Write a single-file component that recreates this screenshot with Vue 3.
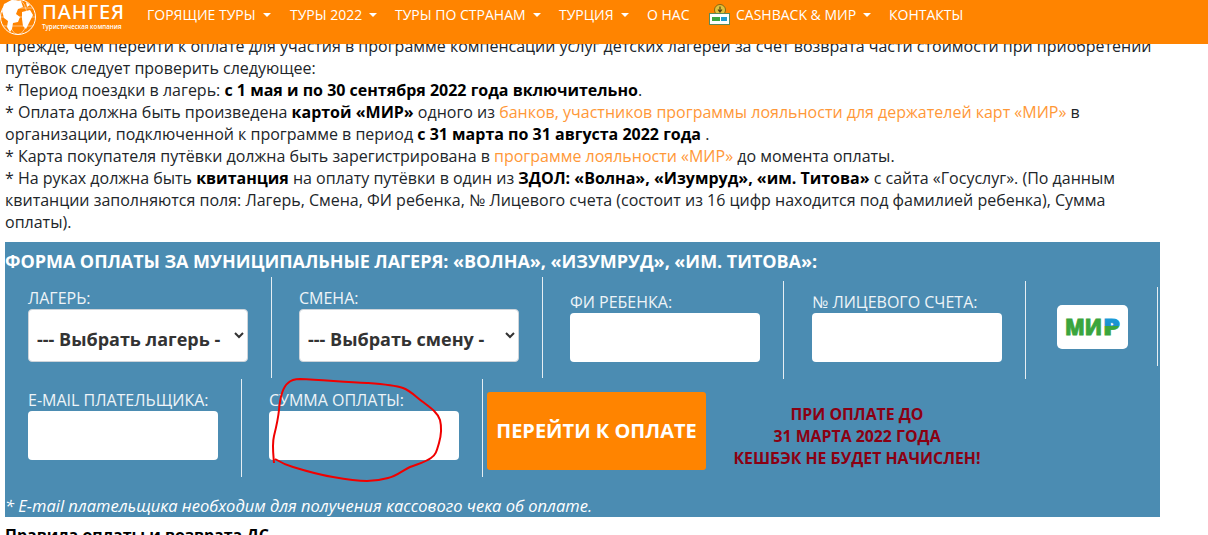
<template>
  <div class="page">
    <!-- шапка лежит поверх текста -->
    <header class="topbar">
      <div class="logo">
        <svg class="globe" width="38" height="38" viewBox="0 0 38 38">
          <circle cx="18" cy="17" r="17.5" fill="none" stroke="#fff" stroke-width="1" />
          <ellipse cx="18" cy="17" rx="9" ry="17.5" fill="none" stroke="#fff" stroke-width=".5" />
          <path d="M1 17h34M3 8h30M3 26h30" stroke="#fff" stroke-width=".5" />
          <path d="M4 4l8-4 9 1 2 6-5 2-2 5 4 3-2 5-5 1-1 6-2 3-3-5 1-6-4-3-2-7z" fill="#fff" />
          <path d="M22 12l8-2 3 5-3 6-4 8-3-3-1-7z" fill="#fff" />
          <path d="M26 2l4 3-3 2z" fill="#fff" />
        </svg>
        <div class="brand">
          <div class="brand-name">ПАНГЕЯ</div>
          <div class="brand-sub">Туристическая компания</div>
        </div>
      </div>
      <nav class="nav">
        <a v-for="item in navItems" :key="item.title" class="nav-item" :style="{ width: item.width + 'px' }">
          <svg v-if="item.icon" class="nav-icon" width="21" height="21" viewBox="0 0 21 21">
            <circle cx="11" cy="6" r="5.5" fill="#e2c13c" stroke="#6b5a12" stroke-width=".8" />
            <path d="M11 2.5v5M9 5.5l2 2.5 2-2.5" fill="none" stroke="#4d4010" stroke-width="1.2" />
            <rect x=".5" y="9.5" width="20" height="11" fill="#fff" stroke="#5d8a5a" />
            <rect x="3" y="13" width="8" height="4" fill="#3ba642" />
            <rect x="12" y="13" width="6" height="4" fill="#1f9ccf" />
          </svg>
          {{ item.title }}<span v-if="item.caret" class="caret"></span>
        </a>
      </nav>
    </header>

    <main class="content">
      <p class="intro">
        Прежде, чем перейти к оплате для участия в программе компенсации услуг детских лагерей за счет возврата части стоимости при приобретении путёвок следует проверить следующее:<br />
        * Период поездки в лагерь: <b>с 1 мая и по 30 сентября 2022 года включительно</b>.<br />
        * Оплата должна быть произведена <b>картой «МИР»</b> одного из <a class="link">банков, участников программы лояльности для держателей карт «МИР»</a> в организации, подключенной к программе в период <b>с 31 марта по 31 августа 2022 года</b> .<br />
        * Карта покупателя путёвки должна быть зарегистрирована в <a class="link">программе лояльности «МИР»</a> до момента оплаты.<br />
        * На руках должна быть <b>квитанция</b> на оплату путёвки в один из <b>ЗДОЛ: «Волна», «Изумруд», «им. Титова»</b> с сайта «Госуслуг». (По данным квитанции заполняются поля: Лагерь, Смена, ФИ ребенка, № Лицевого счета (состоит из 16 цифр находится под фамилией ребенка), Сумма оплаты).
      </p>

      <form class="pay-form" @submit.prevent>
        <h2 class="form-title">ФОРМА ОПЛАТЫ ЗА МУНИЦИПАЛЬНЫЕ ЛАГЕРЯ: «ВОЛНА», «ИЗУМРУД», «ИМ. ТИТОВА»:</h2>

        <div class="row row-top">
          <div class="col col-camp">
            <label>ЛАГЕРЬ:</label>
            <select><option>--- Выбрать лагерь -</option></select>
          </div>
          <div class="col col-shift">
            <label>СМЕНА:</label>
            <select><option>--- Выбрать смену -</option></select>
          </div>
          <div class="col col-child">
            <label>ФИ РЕБЕНКА:</label>
            <input type="text" />
          </div>
          <div class="col col-account">
            <label>№ ЛИЦЕВОГО СЧЕТА:</label>
            <input type="text" />
          </div>
          <div class="col col-mir">
            <div class="mir-card">
              <svg width="56" height="24" viewBox="0 0 56 24">
                <defs>
                  <linearGradient id="mirGrad" gradientUnits="userSpaceOnUse" x1="0" y1="3" x2="0" y2="20">
                    <stop offset="0" stop-color="#1a9bd7" />
                    <stop offset=".46" stop-color="#1a8fd0" />
                    <stop offset=".5" stop-color="#3ba53c" />
                    <stop offset="1" stop-color="#3ba53c" />
                  </linearGradient>
                </defs>
                <text x="0" y="20" class="mir-text" textLength="37" lengthAdjust="spacingAndGlyphs" fill="#3ba53c" stroke="#3ba53c" stroke-width=".9">МИ</text>
                <text x="38" y="20" class="mir-text" textLength="17" lengthAdjust="spacingAndGlyphs" fill="url(#mirGrad)" stroke="url(#mirGrad)" stroke-width=".9">Р</text>
              </svg>
            </div>
          </div>
        </div>

        <div class="row row-bottom">
          <div class="col col-email">
            <label>E-MAIL ПЛАТЕЛЬЩИКА:</label>
            <input type="text" />
          </div>
          <div class="col col-sum">
            <label>СУММА ОПЛАТЫ:</label>
            <input type="text" />
          </div>
          <button class="pay-btn" type="submit">ПЕРЕЙТИ К ОПЛАТЕ</button>
          <div class="notice">ПРИ ОПЛАТЕ ДО<br />31 МАРТА 2022 ГОДА<br />КЕШБЭК НЕ БУДЕТ НАЧИСЛЕН!</div>
        </div>

        <p class="footnote">* E-mail плательщика необходим для получения кассового чека об оплате.</p>
      </form>

      <h3 class="rules">Правила оплаты и возврата ДС</h3>
    </main>

    <!-- красная пометка от руки поверх поля суммы -->
    <svg class="scribble" width="1208" height="535" viewBox="0 0 1208 535">
      <path
        d="M274 463C273 452 272 444 274 436C276 428 278 420 279 410C280 398 283 387 288 383C291 380 295 379 300 379C322 380 345 382 367 383C380 384 394 385 403 388C411 391 416 397 423 402C431 408 438 413 440 420C442 428 441 436 439 443C437 450 436 455 431 458C424 463 417 464 410 467C403 470 397 476 388 478C381 480 374 481 367 481C355 481 344 479 333 477C320 475 306 471 293 467C286 465 280 462 275 459"
        fill="none" stroke="#f00000" stroke-width="2"
      />
    </svg>
  </div>
</template>

<script setup>
// пункты меню: ширина задаёт шаг между пунктами
const navItems = [
  { title: 'ГОРЯЩИЕ ТУРЫ', caret: true, width: 143 },
  { title: 'ТУРЫ 2022', caret: true, width: 105 },
  { title: 'ТУРЫ ПО СТРАНАМ', caret: true, width: 164 },
  { title: 'ТУРЦИЯ', caret: true, width: 88 },
  { title: 'О НАС', width: 62 },
  { title: 'CASHBACK & МИР', caret: true, icon: true, width: 180 },
  { title: 'КОНТАКТЫ', width: 80 }
]
</script>

<style>
html, body {
  margin: 0;
  background: #fff;
  overflow: hidden;
}
</style>

<style scoped>
.page {
  width: 1208px;
  height: 535px;
  overflow: hidden;
  font-family: "Open Sans", "Noto Sans", sans-serif;
  font-size: 16px;
  line-height: 22px;
  color: #212529;
}

.topbar {
  position: fixed;
  top: 0;
  left: 0;
  right: 0;
  height: 44px;
  background: #ff8400;
  display: flex;
  overflow: hidden;
  z-index: 2;
}

.logo {
  width: 147px;
  display: flex;
  flex-shrink: 0;
}

.globe {
  margin-right: 4px;
  flex-shrink: 0;
}

.brand {
  color: #fff;
  padding-top: 2px;
}

.brand-name {
  font-family: "Noto Sans", sans-serif;
  font-size: 20px;
  font-weight: 500;
  line-height: 20px;
  letter-spacing: 0.9px;
}

.brand-sub {
  font-size: 6.2px;
  line-height: 9px;
  font-weight: 600;
  white-space: nowrap;
}

.nav {
  display: flex;
  height: 29px;
  align-items: center;
}

.nav-item {
  color: #fff;
  font-size: 14px;
  white-space: nowrap;
  display: flex;
  align-items: center;
  flex-shrink: 0;
}

.nav-icon {
  margin-right: 6px;
}

.caret {
  width: 0;
  height: 0;
  margin-left: 7px;
  border-top: 4px solid #fff;
  border-left: 4px solid transparent;
  border-right: 4px solid transparent;
}

.content {
  padding: 35px 48px 0 5px;
  width: 1155px;
  box-sizing: content-box;
}

.intro {
  margin: 0 0 9px;
}

.intro b {
  color: #000;
}

.link {
  color: #ff9838;
}

.pay-form {
  background: #4b8cb2;
  color: #fff;
  width: 1155px;
  height: 275px;
}

.form-title {
  margin: 0;
  height: 35px;
  font-size: 18px;
  line-height: 38px;
  font-weight: 700;
  letter-spacing: -0.05px;
  white-space: nowrap;
}

.row {
  display: flex;
  align-items: flex-start;
}

.row-top {
  height: 102px;
}

.col {
  box-sizing: border-box;
  border-right: 1px solid #e6eef3;
  padding-top: 11px;
  flex-shrink: 0;
}

label {
  display: block;
  height: 21px;
  line-height: 20px;
  color: #eef4f8;
  white-space: nowrap;
}

select {
  display: block;
  box-sizing: border-box;
  height: 53px;
  width: 220px;
  border: 1px solid #ced4da;
  border-radius: 4px;
  background: #fff;
  padding: 6px 4px 0;
  font-family: inherit;
  font-size: 18px;
  font-weight: 700;
  color: #333;
}

input {
  display: block;
  box-sizing: border-box;
  width: 190px;
  height: 49px;
  border: 0;
  border-radius: 4px;
  background: #fff;
}

.col-camp {
  width: 267px;
  height: 101px;
  padding-left: 23px;
}

.col-shift {
  width: 271px;
  height: 101px;
  padding-left: 27px;
}

.col-child,
.col-account {
  height: 98px;
  margin-top: 4px;
  padding-top: 11px;
}

.col-child {
  width: 241px;
  padding-left: 27px;
}

.col-account {
  width: 242px;
  padding-left: 28px;
}

.col-mir {
  width: 132px;
  height: 79px;
  margin-top: 10px;
  padding: 18px 0 0 31px;
}

.mir-card {
  width: 71px;
  height: 44px;
  background: #fff;
  border-radius: 5px;
  display: flex;
  align-items: center;
  justify-content: center;
}

.mir-text {
  font-family: "Open Sans", sans-serif;
  font-size: 23px;
  font-weight: 800;
}

.row-bottom {
  height: 98px;
}

.col-email {
  width: 237px;
  height: 98px;
  padding-left: 23px;
}

.col-sum {
  width: 241px;
  height: 98px;
  padding-left: 27px;
}

.pay-btn {
  width: 219px;
  height: 78px;
  margin: 13px 0 0 4px;
  padding: 0 0 2px;
  border: 0;
  border-radius: 3px;
  background: #ff8400;
  color: #fff;
  font-family: inherit;
  font-size: 20px;
  font-weight: 700;
  flex-shrink: 0;
}

.notice {
  width: 302px;
  margin-top: 24px;
  text-align: center;
  font-size: 15.85px;
  color: #8b0012;
  font-weight: 700;
  flex-shrink: 0;
}

.footnote {
  margin: 18px 0 0;
  font-size: 16.5px;
  font-style: italic;
  white-space: nowrap;
}

.rules {
  margin: 7px 0 0;
  font-size: 16px;
  line-height: 22px;
  font-weight: 700;
  color: #000;
}

.scribble {
  position: absolute;
  top: 0;
  left: 0;
  pointer-events: none;
  z-index: 1;
}
</style>
